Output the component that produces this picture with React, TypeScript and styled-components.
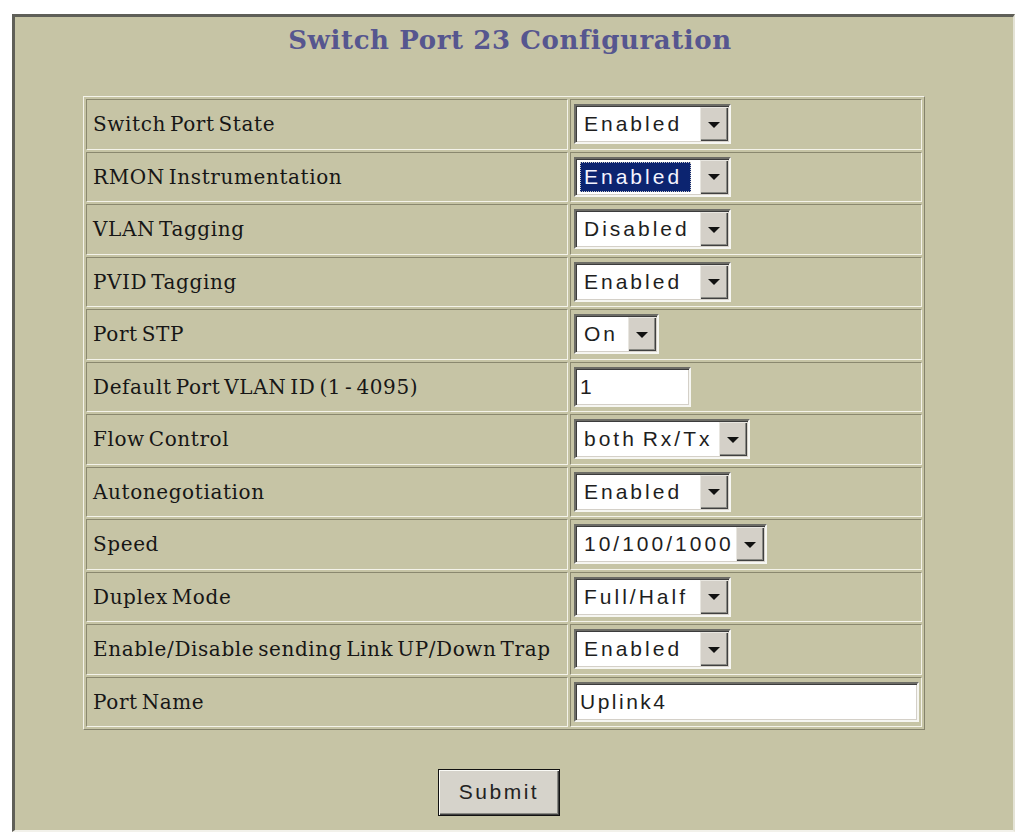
import styled, { createGlobalStyle } from 'styled-components'

const GlobalStyle = createGlobalStyle`
  html, body {
    margin: 0;
    padding: 0;
    background: #fff;
  }
  * {
    box-sizing: border-box;
  }
`

// 外枠（くぼんだパネル）
const Frame = styled.div`
  margin: 14px 0 0 12px;
  width: 1003px;
  height: 818px;
  background: #c6c4a5;
  border-top: 3px solid #5f5f58;
  border-left: 3px solid #5f5f58;
  border-right: 2px solid #e4e3d6;
  border-bottom: 2px solid #f2f1ea;
  display: flex;
  flex-direction: column;
  align-items: center;
  padding-right: 20px;
`

const Title = styled.h1`
  margin: 7px 0 0 12px;
  height: 32px;
  line-height: 32px;
  font-family: 'DejaVu Serif', 'Liberation Serif', serif;
  font-size: 26px;
  font-weight: bold;
  letter-spacing: 0.6px;
  color: #56568f;
`

// 設定テーブル
const ConfigTable = styled.table`
  margin-top: 40px;
  width: 842px;
  table-layout: fixed;
  border-collapse: separate;
  border-spacing: 2px;
  border-top: 1px solid #f4f3ea;
  border-left: 1px solid #f4f3ea;
  border-right: 1px solid #85836c;
  border-bottom: 1px solid #85836c;
`

const Cell = styled.td<{ $label?: boolean }>`
  height: 50.5px;
  width: ${({ $label }) => ($label ? '482px' : 'auto')};
  padding: ${({ $label }) => ($label ? '0 0 0 6px' : '0 0 0 3px')};
  border-top: 1px solid #8a886f;
  border-left: 1px solid #8a886f;
  border-right: 1px solid #f4f3ea;
  border-bottom: 1px solid #f4f3ea;
  vertical-align: middle;
  white-space: nowrap;
  font-family: 'DejaVu Serif', 'Liberation Serif', serif;
  font-size: 20px;
  letter-spacing: 0.6px;
  word-spacing: -3px;
  color: #161616;
`

// Win クラシック風のセレクトボックス
const SelectBox = styled.div<{ $w: number }>`
  width: ${({ $w }) => $w}px;
  height: 40px;
  display: flex;
  align-items: stretch;
  background: #fff;
  border-top: 2px solid #6c6c66;
  border-left: 2px solid #6c6c66;
  border-right: 2px solid #f6f6f2;
  border-bottom: 2px solid #f6f6f2;
  box-shadow: inset 1px 1px 0 #3c3c3c, inset -1px -1px 0 #d4d0c8;
  padding: 1px;
`

const SelectValue = styled.div<{ $active?: boolean }>`
  flex: 1;
  display: flex;
  align-items: center;
  padding-left: 3px;
  min-width: 0;

  span {
    display: flex;
    align-items: center;
    height: 30px;
    padding: 0 9px 0 4px;
    font-family: 'Liberation Sans', Arial, sans-serif;
    font-size: 21px;
    letter-spacing: 3px;
    color: ${({ $active }) => ($active ? '#f4f4ff' : '#1e1e1e')};
    background: ${({ $active }) => ($active ? '#0c2470' : 'transparent')};
    outline: ${({ $active }) => ($active ? '1px dotted #c8c8c8' : 'none')};
    outline-offset: -1px;
  }
`

const ArrowButton = styled.div`
  width: 28px;
  display: flex;
  align-items: center;
  justify-content: center;
  background: #d4d0c8;
  box-shadow: inset 1px 1px 0 #e8e6e0, inset -1px -1px 0 #404040,
    inset -2px -2px 0 #8a8a84;
`

const Arrow = styled.div`
  width: 0;
  height: 0;
  margin-top: 1px;
  border-left: 6px solid transparent;
  border-right: 6px solid transparent;
  border-top: 6px solid #111;
`

const TextBox = styled.input<{ $w: number }>`
  width: ${({ $w }) => $w}px;
  height: 40px;
  padding: 0 0 0 4px;
  background: #fff;
  border-top: 2px solid #6c6c66;
  border-left: 2px solid #6c6c66;
  border-right: 2px solid #f6f6f2;
  border-bottom: 2px solid #f6f6f2;
  box-shadow: inset 1px 1px 0 #3c3c3c, inset -1px -1px 0 #d4d0c8;
  font-family: 'Liberation Sans', Arial, sans-serif;
  font-size: 21px;
  letter-spacing: 2.5px;
  color: #1e1e1e;
  outline: none;
`

const SubmitButton = styled.button`
  margin: 39px 10px 0 0;
  width: 122px;
  height: 47px;
  padding: 0 0 2px;
  background: #d6d3cb;
  border: 1px solid #111;
  box-shadow: inset 1px 1px 0 #fafaf6, inset -1px -1px 0 #404040,
    inset -2px -2px 0 #8a8a84;
  font-family: 'Liberation Sans', Arial, sans-serif;
  font-size: 21px;
  letter-spacing: 2.5px;
  color: #222;
`

type Row =
  | { label: string; kind: 'select'; value: string; width: number; active?: boolean }
  | { label: string; kind: 'text'; value: string; width: number }

const rows: Row[] = [
  { label: 'Switch Port State', kind: 'select', value: 'Enabled', width: 157 },
  { label: 'RMON Instrumentation', kind: 'select', value: 'Enabled', width: 157, active: true },
  { label: 'VLAN Tagging', kind: 'select', value: 'Disabled', width: 157 },
  { label: 'PVID Tagging', kind: 'select', value: 'Enabled', width: 157 },
  { label: 'Port STP', kind: 'select', value: 'On', width: 85 },
  { label: 'Default Port VLAN ID (1 - 4095)', kind: 'text', value: '1', width: 117 },
  { label: 'Flow Control', kind: 'select', value: 'both Rx/Tx', width: 176 },
  { label: 'Autonegotiation', kind: 'select', value: 'Enabled', width: 157 },
  { label: 'Speed', kind: 'select', value: '10/100/1000', width: 193 },
  { label: 'Duplex Mode', kind: 'select', value: 'Full/Half', width: 157 },
  { label: 'Enable/Disable sending Link UP/Down Trap', kind: 'select', value: 'Enabled', width: 157 },
  { label: 'Port Name', kind: 'text', value: 'Uplink4', width: 345 },
]

const App = () => {
  return (
    <>
      <GlobalStyle />
      <Frame>
        <Title>Switch Port 23 Configuration</Title>
        <ConfigTable>
          <tbody>
            {rows.map((r) => (
              <tr key={r.label}>
                <Cell $label>{r.label}</Cell>
                <Cell>
                  {r.kind === 'select' ? (
                    <SelectBox $w={r.width}>
                      <SelectValue $active={r.active}>
                        <span>{r.value}</span>
                      </SelectValue>
                      <ArrowButton>
                        <Arrow />
                      </ArrowButton>
                    </SelectBox>
                  ) : (
                    <TextBox $w={r.width} defaultValue={r.value} readOnly />
                  )}
                </Cell>
              </tr>
            ))}
          </tbody>
        </ConfigTable>
        <SubmitButton>Submit</SubmitButton>
      </Frame>
    </>
  )
}

export default App
